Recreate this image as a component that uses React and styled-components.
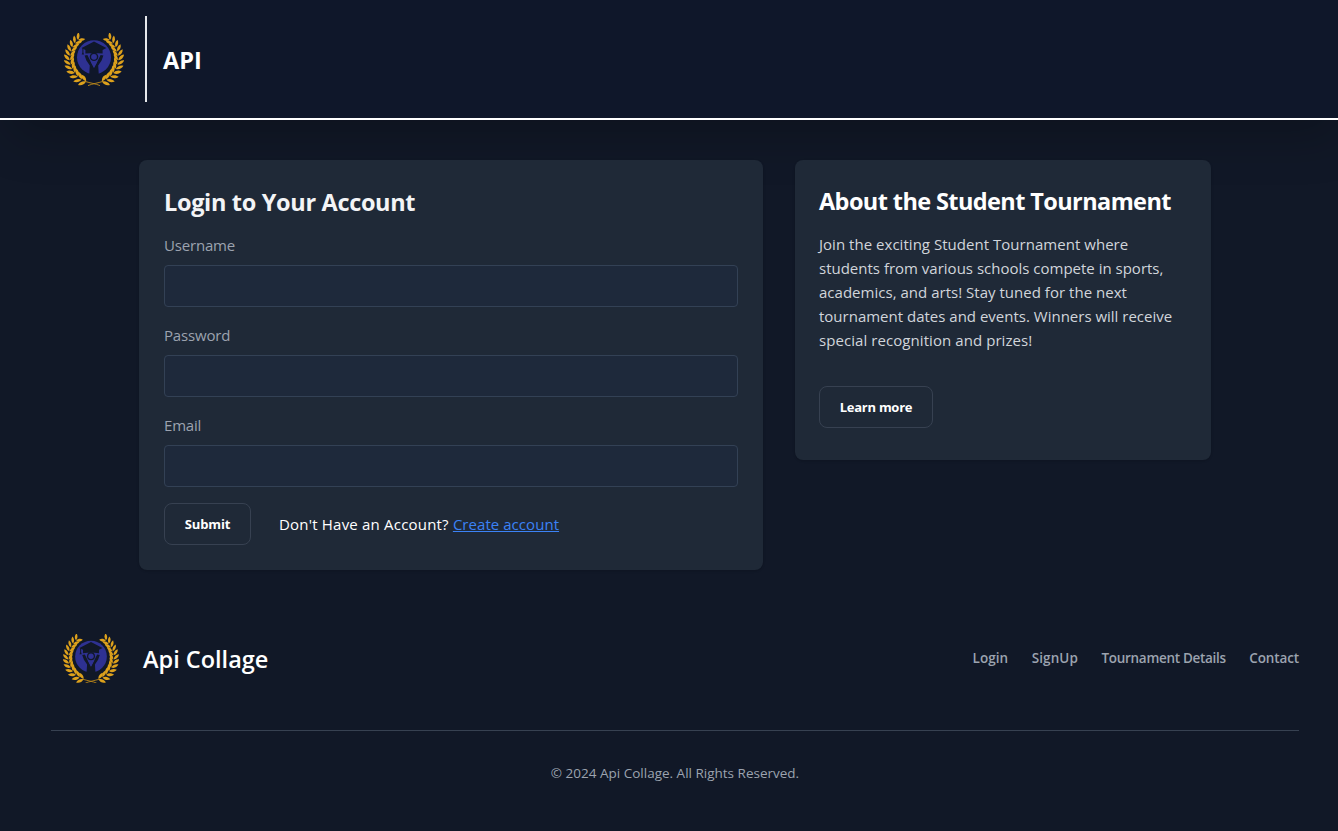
import React from "react";
import styled, { createGlobalStyle } from "styled-components";

const GlobalStyle = createGlobalStyle`
  *, *::before, *::after { box-sizing: border-box; }
  html { overflow: hidden; background: #111827; }
  body {
    margin: 0;
    background: #111827;
    color: #fff;
    font-family: "Open Sans", "Noto Sans", sans-serif;
    font-size: 15px;
    line-height: 24px;
  }
  h1, h2, p { margin: 0; }
`;

const Page = styled.div`
  width: 1350px;
  min-height: 831px;
  background: #111827;
`;

const Header = styled.header`
  display: flex;
  align-items: center;
  height: 120px;
  padding: 0 64px;
  background: #0f172a;
  border-bottom: 2px solid #fff;
  box-shadow: 0 25px 50px -12px rgba(0, 0, 0, 0.25);
`;

const HeaderDivider = styled.div`
  width: 2px;
  height: 86px;
  margin: 0 16px 0 21px;
  background: #e5e7eb;
`;

const Title = styled.h2`
  padding-top: ${(p) => p.$drop || 0}px;
  font-size: 23.5px;
  font-weight: ${(p) => p.$weight || 700};
  line-height: 32px;
  letter-spacing: ${(p) => p.$track || 0}px;
  color: ${(p) => p.$color || "#fff"};
  white-space: nowrap;
`;

const Main = styled.main`
  display: grid;
  grid-template-columns: 3fr 2fr;
  gap: 32px;
  align-items: start;
  width: 1072px;
  margin: 40px auto 0;
`;

const Card = styled.section`
  height: ${(p) => p.$height}px;
  padding: ${(p) => p.$pad};
  background: #1f2937;
  border-radius: 8px;
  box-shadow: 0 1px 3px rgba(0, 0, 0, 0.1), 0 1px 2px -1px rgba(0, 0, 0, 0.1);
`;

const Form = styled.form`
  display: flex;
  flex-direction: column;
  gap: 16px;
  margin-top: 15px;
`;

const Field = styled.label`
  display: flex;
  flex-direction: column;
  gap: 8px;
  color: #9ca3af;
  letter-spacing: -0.18px;
`;

const Input = styled.input`
  width: 100%;
  height: 42px;
  padding: 8px 16px;
  color: #d1d5db;
  background: #1e293b;
  border: 1px solid #334155;
  border-radius: 4px;
  outline: none;
`;

const Actions = styled.div`
  display: flex;
  align-items: center;
  gap: 28px;
`;

const Button = styled.button`
  width: ${(p) => p.$width}px;
  height: 42px;
  padding: 0;
  font: 700 13px/20px "Open Sans", "Noto Sans", sans-serif;
  letter-spacing: ${(p) => p.$track}px;
  color: #fff;
  background: transparent;
  border: 1px solid #374151;
  border-radius: 8px;
`;

const Prompt = styled.p`
  letter-spacing: 0.2px;
  white-space: nowrap;
`;

const Link = styled.a`
  color: #3b82f6;
  letter-spacing: 0.05px;
  text-decoration: underline;
`;

const About = styled.p`
  margin: 15px 0 34px;
  color: #d1d5db;
`;

const Line = styled.span`
  display: block;
  letter-spacing: ${(p) => p.$track}px;
  white-space: nowrap;
`;

const Footer = styled.footer`
  width: 1248px;
  margin: 62px auto 0;
`;

const FooterTop = styled.div`
  display: flex;
  align-items: center;
  justify-content: space-between;
  height: 53px;
  padding-left: 12px;
`;

const Brand = styled.div`
  display: flex;
  align-items: center;
  gap: 24px;
`;

const FooterNav = styled.nav`
  display: flex;
  gap: 23.5px;
  padding-bottom: 2px;
`;

const NavItem = styled.a`
  font-size: 13.5px;
  font-weight: 600;
  line-height: 20px;
  letter-spacing: ${(p) => p.$track}px;
  color: #9ca3af;
  white-space: nowrap;
`;

const Copyright = styled.p`
  margin-top: 45px;
  padding-top: 32px;
  border-top: 1px solid #374151;
  font-size: 13.5px;
  line-height: 20px;
  text-align: center;
  color: #9ca3af;
`;

const LogoSvg = styled.svg`
  display: block;
  flex: none;
`;

/* One branch of the laurel, bottom to top: x, y, direction of the stem in degrees. */
const stem = [
  [22, 48.6, 198], [17.6, 46.6, 208], [13.8, 43.6, 220], [10.6, 40, 232],
  [8.2, 36, 244], [6.6, 31.6, 254], [5.8, 27.2, 265], [5.9, 22.8, 276],
  [6.8, 18.4, 286], [8.4, 14.2, 296], [10.8, 10.2, 306], [13.8, 6.8, 316],
];

function Branch() {
  return (
    <g fill="#dda11c">
      {stem.map(([x, y, a], i) => (
        <g key={i} transform={`translate(${x} ${y}) rotate(${a}) scale(${1.02 - i * 0.012})`}>
          <path d="M0 0C.5-3.6 3.2-5.4 6.4-5.6 5.8-2.4 3.4-.2 0 0Z" />
          <path d="M0 .3C.8 3.8 3.4 5.4 6.6 5.2 5.8 2.2 3.4.4 0 .3Z" />
        </g>
      ))}
      <path
        d="M36 52.6C32 50.8 26 50 21 48.4"
        fill="none"
        stroke="#c08a18"
        strokeWidth=".9"
      />
    </g>
  );
}

function Logo({ width, bg }) {
  return (
    <LogoSvg width={width} height={(width * 53) / 60} viewBox="0 0 60 53" aria-hidden="true">
      <Branch />
      <g transform="translate(60 0) scale(-1 1)">
        <Branch />
      </g>
      <circle cx="30" cy="24.2" r="17" fill="#2e3192" />
      <g fill={bg}>
        <path d="M30 8.6 42.4 15 38.6 17V20.6L34 20.2H26L21.4 20.6V17L17.6 15Z" />
        <path d="M18.4 15h1v4.6l.7 2h-2.4l.7-2Z" />
        <path d="M20.6 22.4 23.4 22 26 27.2 30 35 34 27.2 36.6 22 39.4 22.4 37.6 27.6 34.2 32.6 34.8 42H25.2L25.8 32.6 22.4 27.6Z" />
      </g>
      <circle cx="30" cy="23.8" r="4.3" fill={bg} />
      <circle cx="30" cy="23.8" r="2.9" fill="#2e3192" />
      <path d="M26.4 28.2Q30 30.2 33.6 28.2L30 34.8Z" fill="#2e3192" />
    </LogoSvg>
  );
}

const fields = [
  { label: "Username", type: "text" },
  { label: "Password", type: "password" },
  { label: "Email", type: "email" },
];

const about = [
  { text: "Join the exciting Student Tournament where", track: 0.03 },
  { text: "students from various schools compete in sports,", track: 0 },
  { text: "academics, and arts! Stay tuned for the next", track: 0.02 },
  { text: "tournament dates and events. Winners will receive", track: 0 },
  { text: "special recognition and prizes!", track: 0.07 },
];

const links = [
  { text: "Login", track: 0.05 },
  { text: "SignUp", track: 0.1 },
  { text: "Tournament Details", track: -0.3 },
  { text: "Contact", track: -0.13 },
];

export default function App() {
  return (
    <Page>
      <GlobalStyle />
      <Header>
        <Logo width={60} bg="#0f172a" />
        <HeaderDivider />
        <Title as="h1" $drop={1}>API</Title>
      </Header>
      <Main>
        <Card $height={410} $pad="26px 25px">
          <Title $color="#f3f4f6" $track={-0.33}>Login to Your Account</Title>
          <Form>
            {fields.map((f) => (
              <Field key={f.label}>
                {f.label}
                <Input type={f.type} />
              </Field>
            ))}
            <Actions>
              <Button type="button" $width={87} $track={-0.1}>Submit</Button>
              <Prompt>
                Don't Have an Account? <Link>Create account</Link>
              </Prompt>
            </Actions>
          </Form>
        </Card>
        <Card $height={300} $pad="25px 24px">
          <Title $track={-0.6}>About the Student Tournament</Title>
          <About>
            {about.map((l) => (
              <Line key={l.text} $track={l.track}>{l.text}</Line>
            ))}
          </About>
          <Button type="button" $width={114} $track={-0.27}>Learn more</Button>
        </Card>
      </Main>
      <Footer>
        <FooterTop>
          <Brand>
            <Logo width={56} bg="#111827" />
            <Title $weight={600} $drop={2}>Api Collage</Title>
          </Brand>
          <FooterNav>
            {links.map((l) => (
              <NavItem key={l.text} $track={l.track}>{l.text}</NavItem>
            ))}
          </FooterNav>
        </FooterTop>
        <Copyright>© 2024 Api Collage. All Rights Reserved.</Copyright>
      </Footer>
    </Page>
  );
}
